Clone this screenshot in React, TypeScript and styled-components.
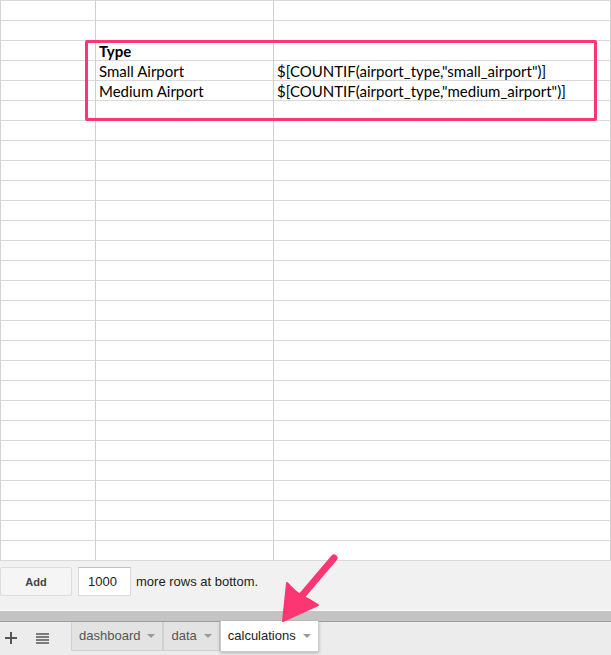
import React from 'react'
import styled, { createGlobalStyle } from 'styled-components'

const GlobalStyle = createGlobalStyle`
  html, body {
    margin: 0;
    padding: 0;
    background: #ffffff;
  }
  body {
    font-family: "Liberation Sans", Arial, sans-serif;
  }
`

const Page = styled.div`
  position: relative;
  width: 611px;
  height: 655px;
  overflow: hidden;
  display: flex;
  flex-direction: column;
`

const Grid = styled.div`
  border-top: 1px solid #d9d9d9;
  border-left: 1px solid #d4d4d4;
`

const Row = styled.div`
  display: grid;
  grid-template-columns: 95px 178px 337px;
  height: 20px;
  box-sizing: border-box;
  border-bottom: 1px solid #d9d9d9;
`

const Cell = styled.div<{ $bold?: boolean }>`
  box-sizing: border-box;
  border-right: 1px solid #cfcfcf;
  padding-left: 3px;
  font-family: Lato, "Open Sans", sans-serif;
  font-size: 15px;
  line-height: 20px;
  color: #000;
  white-space: nowrap;
  overflow: visible;
  font-weight: ${(p) => (p.$bold ? 700 : 400)};
`

const Highlight = styled.div`
  position: absolute;
  left: 85px;
  top: 40px;
  width: 512px;
  height: 81px;
  box-sizing: border-box;
  border: 3px solid #fc3673;
  border-radius: 2px;
  pointer-events: none;
`

const AddBar = styled.div`
  height: 49px;
  background: #f1f1f1;
  display: flex;
  align-items: flex-start;
  padding-top: 6px;
  box-sizing: border-box;
  gap: 6px;
`

const AddButton = styled.button`
  width: 72px;
  height: 29px;
  margin: 0;
  background: #f5f5f5;
  border: 1px solid #dcdcdc;
  border-radius: 2px;
  font-family: "Liberation Sans", Arial, sans-serif;
  font-weight: 700;
  font-size: 11px;
  color: #444;
`

const RowsInput = styled.div`
  width: 53px;
  height: 29px;
  box-sizing: border-box;
  background: #fff;
  border: 1px solid #d9d9d9;
  border-top-color: #c0c0c0;
  font-size: 13px;
  line-height: 27px;
  padding-left: 9px;
  color: #222;
`

const AddLabel = styled.span`
  font-size: 13px;
  line-height: 30px;
  color: #222;
  margin-left: -1px;
`

const Scrollbar = styled.div`
  height: 12px;
  box-sizing: border-box;
  border-top: 1px solid #fafafa;
  border-bottom: 1px solid #9e9e9e;
  background: #c4c4c4;
`

const TabBar = styled.div`
  flex: 1;
  background: #ececec;
  display: flex;
  align-items: flex-start;
`

const IconButton = styled.div<{ $w: number }>`
  width: ${(p) => p.$w}px;
  height: 32px;
  display: flex;
  align-items: center;
  justify-content: center;
  color: #555;
`

const Tab = styled.div<{ $active?: boolean }>`
  height: ${(p) => (p.$active ? 31 : 29)}px;
  margin-top: ${(p) => (p.$active ? -1 : 0)}px;
  box-sizing: border-box;
  display: flex;
  align-items: center;
  padding: 0 7px 1px 7px;
  gap: 7px;
  background: ${(p) => (p.$active ? '#ffffff' : '#e3e3e3')};
  border: 1px solid ${(p) => (p.$active ? '#cccccc' : '#d0d0d0')};
  border-top: none;
  box-shadow: ${(p) => (p.$active ? '0 1px 3px rgba(0,0,0,0.25)' : 'none')};
  font-size: 13px;
  color: ${(p) => (p.$active ? '#222' : '#555')};
  position: relative;
`

const Caret = styled.span`
  width: 0;
  height: 0;
  border-left: 4px solid transparent;
  border-right: 4px solid transparent;
  border-top: 4px solid #999;
  margin-top: 1px;
`

const Overlay = styled.svg`
  position: absolute;
  left: 0;
  top: 0;
  pointer-events: none;
`

const rows: [string, string, boolean][] = [
  ['', '', false],
  ['', '', false],
  ['Type', '', true],
  ['Small Airport', '$[COUNTIF(airport_type,"small_airport")]', false],
  ['Medium Airport', '$[COUNTIF(airport_type,"medium_airport")]', false],
]

const TOTAL_ROWS = 28

export default function App() {
  const all = Array.from({ length: TOTAL_ROWS }, (_, i) => rows[i] ?? ['', '', false])
  return (
    <Page>
      <GlobalStyle />
      <Grid>
        {all.map(([a, b, bold], i) => (
          <Row key={i}>
            <Cell />
            <Cell $bold={bold}>{a}</Cell>
            <Cell>{b}</Cell>
          </Row>
        ))}
      </Grid>
      <AddBar>
        <AddButton>Add</AddButton>
        <RowsInput>1000</RowsInput>
        <AddLabel>more rows at bottom.</AddLabel>
      </AddBar>
      <Scrollbar />
      <TabBar>
        <IconButton $w={22}>
          <svg width="12" height="12" viewBox="0 0 12 12">
            <path d="M6 0v12M0 6h12" stroke="#555" strokeWidth="2" />
          </svg>
        </IconButton>
        <IconButton $w={40}>
          <svg width="13" height="11" viewBox="0 0 13 11">
            <path d="M0 1h13M0 4h13M0 7h13M0 10h13" stroke="#555" strokeWidth="1.6" />
          </svg>
        </IconButton>
        <Tab style={{ marginLeft: 9 }}>
          dashboard<Caret />
        </Tab>
        <Tab>
          data<Caret />
        </Tab>
        <Tab $active>
          calculations<Caret />
        </Tab>
      </TabBar>
      <Highlight />
      <Overlay width="611" height="655" viewBox="0 0 611 655">
        <path d="M334 558 L300 598" stroke="#fc3673" strokeWidth="7" strokeLinecap="round" />
        <path
          d="M283 621 L287 583 Q296 593 302 596 Q310 600 318 605 Z"
          fill="#fc3673"
          stroke="#fc3673"
          strokeWidth="2"
          strokeLinejoin="round"
        />
      </Overlay>
    </Page>
  )
}
